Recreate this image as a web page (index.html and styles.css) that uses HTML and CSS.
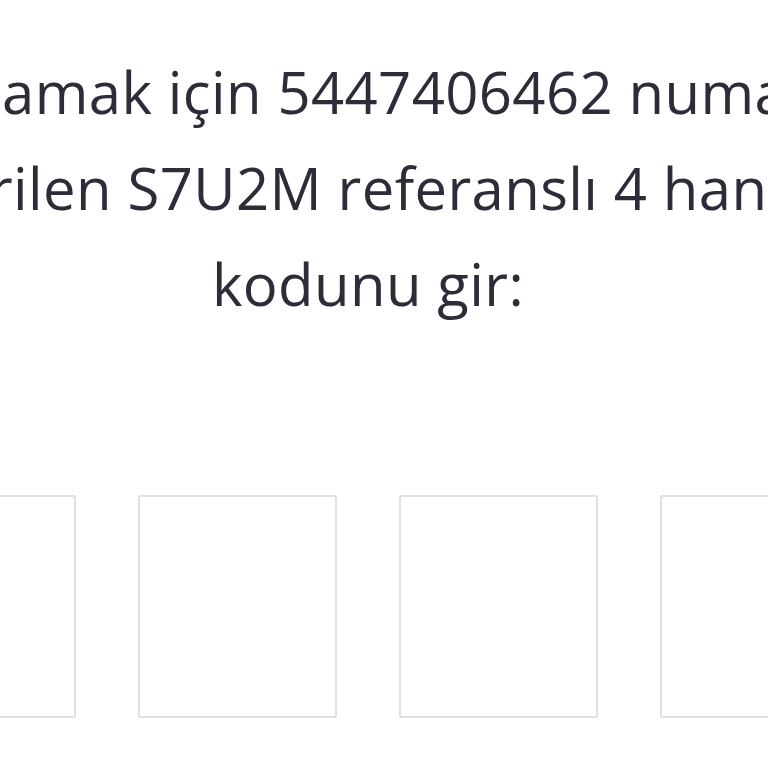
FILE: index.html
```html
<!DOCTYPE html>
<html lang="tr">
<head>
<meta charset="utf-8">
<title>Doğrulama kodu</title>
<link rel="stylesheet" href="styles.css">
</head>
<body>
<main class="page">
  <p class="message">
    <span class="line">Hesabı doğrulamak için 5447406462 numaralı telefona</span>
    <span class="line">Mesajla gönderilen S7U2M referanslı 4 haneli doğrulama</span>
    <span class="line">kodunu gir:</span>
  </p>
  <div class="code">
    <div class="cell"></div>
    <div class="cell"></div>
    <div class="cell"></div>
    <div class="cell"></div>
  </div>
</main>
</body>
</html>
```
FILE: styles.css
```css
html, body {
  margin: 0;
  padding: 0;
  background: #ffffff;
  overflow: hidden;
}
body {
  width: 768px;
  height: 768px;
}
.page {
  width: 736px;
  display: flex;
  flex-direction: column;
  align-items: center;
  padding-top: 44px;
}
.message {
  margin: 0;
  display: flex;
  flex-direction: column;
  align-items: center;
  font-family: "Open Sans", "Noto Sans", sans-serif;
  font-size: 58px;
  line-height: 96px;
  letter-spacing: 0.4px;
  color: #2d2d3a;
}
.line {
  white-space: nowrap;
}
.code {
  margin-top: 163px;
  display: flex;
  gap: 62px;
}
.cell {
  flex: none;
  width: 195px;
  height: 219px;
  border: 2px solid #e0e0e0;
  border-radius: 2px;
}
```
